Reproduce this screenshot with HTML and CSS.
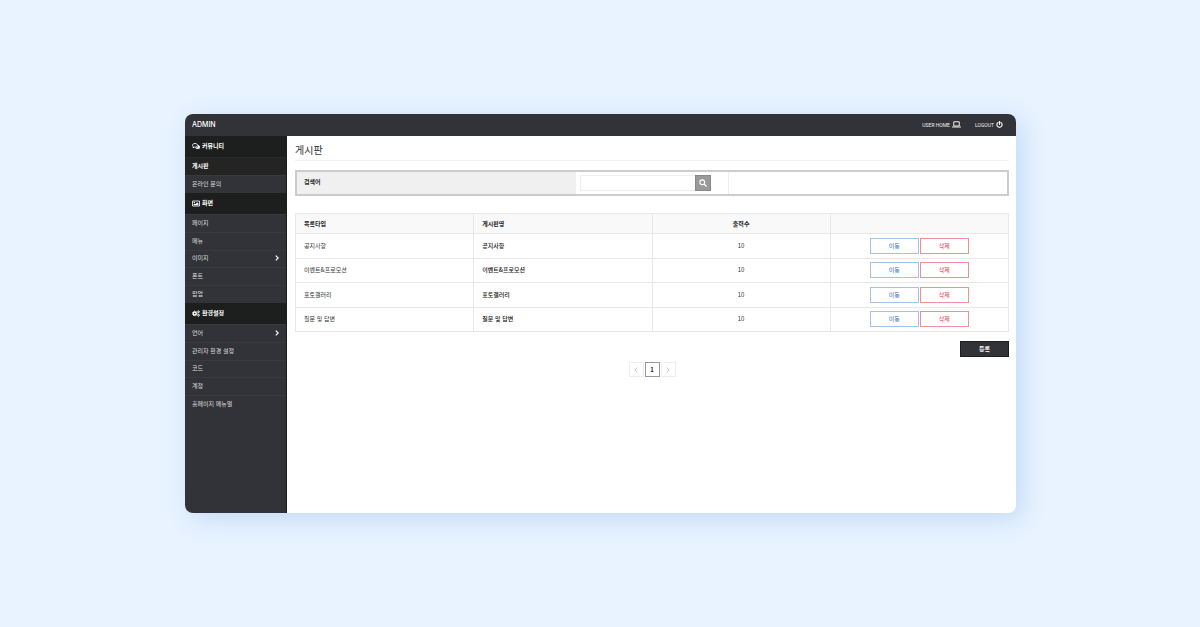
FILE: index.html
```html
<!doctype html>
<html lang="ko">
  <head>
    <meta charset="UTF-8" />
    <meta name="viewport" content="width=device-width, initial-scale=1.0" />
    <title>ADMIN - 게시판</title>
    <link rel="stylesheet" href="styles.css">
  </head>
  <body>
    <div class="admin">
      <header class="topbar">
        <a class="logo" href="#">ADMIN</a>
        <nav class="topbar-links">
          <a href="#">USER HOME
            <svg class="icon-laptop" viewBox="0 0 18 14"><path d="M3.500 1.500h11v8.500h-11z" fill="none" stroke="currentColor" stroke-width="2"/><path d="M0 11h18v1q0 1-1.500 1H1.500Q0 13 0 12z" fill="currentColor"/></svg>
          </a>
          <a href="#">LOGOUT
            <svg class="icon-power" viewBox="0 0 14 14"><path d="M4.200 3A5.200 5.200 0 1 0 9.800 3M7 1v6" fill="none" stroke="currentColor" stroke-width="2.400" stroke-linecap="round"/></svg>
          </a>
        </nav>
      </header>

      <nav class="sidebar">
        <h2>
          <svg class="icon-menu" viewBox="0 0 16 14"><path d="M6 1C2.800 1 1 2.800 1 4.700c0 1.200.7 2.200 1.700 2.900L2 9.600l2.600-1.300c.5.100.9.100 1.400.1 3.200 0 5-1.700 5-3.700S9.200 1 6 1z" fill="none" stroke="currentColor" stroke-width="1.800"/><path d="M12.300 4c2 .6 3.700 2 3.700 4 0 1.200-.6 2.200-1.500 2.900.2.700.6 1.300 1.200 1.800-1.200 0-2.200-.4-3-1-2.700.5-5-.2-6.200-1.700 3.500 0 6-2.400 5.800-6z" fill="currentColor"/></svg>
          커뮤니티
        </h2>
        <ul class="menu menu-short">
          <li class="active"><a href="#">게시판</a></li>
          <li><a href="#">온라인 문의</a></li>
        </ul>
        <h2>
          <svg class="icon-menu" viewBox="0 0 16 14"><path d="M1 2h14v10H1z" fill="none" stroke="currentColor" stroke-width="1.600"/><circle cx="4.500" cy="5" r="1.400" fill="currentColor"/><path d="M3 10.500V9l2-2 1.500 1.500L10.500 4.500 13 7v3.500z" fill="currentColor"/></svg>
          화면
        </h2>
        <ul class="menu">
          <li><a href="#">페이지</a></li>
          <li><a href="#">메뉴</a></li>
          <li>
            <a href="#">이미지
              <svg class="icon-arrow" viewBox="0 0 6 10"><path d="M1 1l4 4-4 4" fill="none" stroke="currentColor" stroke-width="2"/></svg>
            </a>
          </li>
          <li><a href="#">폰트</a></li>
          <li><a href="#">팝업</a></li>
        </ul>
        <h2>
          <svg class="icon-menu" viewBox="0 0 16 14"><circle cx="5.500" cy="7" r="3" fill="none" stroke="currentColor" stroke-width="3"/><circle cx="5.500" cy="7" r="4.800" fill="none" stroke="currentColor" stroke-width="1.500" stroke-dasharray="1.900 1.870"/><circle cx="13" cy="3.500" r="1.600" fill="none" stroke="currentColor" stroke-width="1.800"/><circle cx="13" cy="3.500" r="2.600" fill="none" stroke="currentColor" stroke-dasharray="1.300 1.420"/><circle cx="13" cy="10.500" r="1.600" fill="none" stroke="currentColor" stroke-width="1.800"/><circle cx="13" cy="10.500" r="2.600" fill="none" stroke="currentColor" stroke-dasharray="1.300 1.420"/></svg>
          환경설정
        </h2>
        <ul class="menu">
          <li>
            <a href="#">언어
              <svg class="icon-arrow" viewBox="0 0 6 10"><path d="M1 1l4 4-4 4" fill="none" stroke="currentColor" stroke-width="2"/></svg>
            </a>
          </li>
          <li><a href="#">관리자 환경 설정</a></li>
          <li><a href="#">코드</a></li>
          <li><a href="#">계정</a></li>
          <li><a href="#">홈페이지 메뉴얼</a></li>
        </ul>
      </nav>

      <main class="content">
        <h1>게시판</h1>

        <form class="search">
          <label for="keyword">검색어</label>
          <div class="search-field">
            <input type="text" id="keyword" name="keyword" />
            <button type="button" aria-label="검색">
              <svg viewBox="0 0 16 16"><circle cx="6.500" cy="6.500" r="4.800" fill="none" stroke="currentColor" stroke-width="2.200"/><path d="M10 10l5 5" stroke="currentColor" stroke-width="2.600"/></svg>
            </button>
          </div>
          <div class="search-extra"></div>
        </form>

        <table class="board-list">
          <thead>
            <tr>
              <th>목록타입</th>
              <th>게시판명</th>
              <th class="center">출력수</th>
              <th></th>
            </tr>
          </thead>
          <tbody>
            <tr>
              <td>공지사항</td>
              <td class="name">공지사항</td>
              <td class="center">10</td>
              <td>
                <div class="actions">
                  <button type="button" class="btn btn-move">이동</button>
                  <button type="button" class="btn btn-delete">삭제</button>
                </div>
              </td>
            </tr>
            <tr>
              <td>이벤트&amp;프로모션</td>
              <td class="name">이벤트&amp;프로모션</td>
              <td class="center">10</td>
              <td>
                <div class="actions">
                  <button type="button" class="btn btn-move">이동</button>
                  <button type="button" class="btn btn-delete">삭제</button>
                </div>
              </td>
            </tr>
            <tr>
              <td>포토갤러리</td>
              <td class="name">포토갤러리</td>
              <td class="center">10</td>
              <td>
                <div class="actions">
                  <button type="button" class="btn btn-move">이동</button>
                  <button type="button" class="btn btn-delete">삭제</button>
                </div>
              </td>
            </tr>
            <tr>
              <td>질문 및 답변</td>
              <td class="name">질문 및 답변</td>
              <td class="center">10</td>
              <td>
                <div class="actions">
                  <button type="button" class="btn btn-move">이동</button>
                  <button type="button" class="btn btn-delete">삭제</button>
                </div>
              </td>
            </tr>
          </tbody>
        </table>

        <div class="list-footer">
          <button type="button" class="btn btn-add">등록</button>
        </div>

        <nav class="paging">
          <a href="#" aria-label="이전"><svg viewBox="0 0 6 10"><path d="M5 1L1 5l4 4" fill="none" stroke="currentColor" stroke-width="1.400"/></svg></a>
          <a href="#" class="current">1</a>
          <a href="#" aria-label="다음"><svg viewBox="0 0 6 10"><path d="M1 1l4 4-4 4" fill="none" stroke="currentColor" stroke-width="1.400"/></svg></a>
        </nav>
      </main>
    </div>
  </body>
</html>
```
FILE: styles.css
```css
* {
  box-sizing: border-box;
}
body {
  min-height: 100vh;
  margin: 0;
  padding: 114px 184px 114px 185px;
  display: flex;
  background: #e8f3ff;
  color: #333;
  font-family: "Noto Sans CJK KR", sans-serif;
  font-size: 6px;
  line-height: 10px;
}
a {
  color: inherit;
  text-decoration: none;
}
button,
input {
  font: inherit;
  padding: 0;
  margin: 0;
  border-radius: 0;
}
button {
  cursor: pointer;
}
svg {
  display: block;
  flex: none;
}
.admin {
  flex: 1;
  display: grid;
  grid-template-columns: 102px minmax(0, 1fr);
  grid-template-rows: 22px 1fr;
  background: #fff;
  border-radius: 8px;
  overflow: hidden;
  box-shadow: 6px 6px 26px #c4d9f5;
}

/* top bar */
.topbar {
  grid-column: 1 / -1;
  display: flex;
  align-items: center;
  justify-content: space-between;
  padding: 0 13px 1px 7px;
  background: #323338;
  color: #fff;
}
.logo {
  font-family: Inter, sans-serif;
  font-size: 7px;
  font-weight: 500;
}
.topbar-links {
  display: flex;
  gap: 14px;
  color: #eee;
  font-family: Roboto, sans-serif;
  font-size: 5px;
}
.topbar-links a {
  display: flex;
  align-items: center;
  gap: 2px;
}
.icon-laptop {
  width: 9px;
  height: 7px;
}
.icon-power {
  width: 7px;
  height: 7px;
}

/* sidebar */
.sidebar {
  background: #323338;
  border-right: 1px solid #1c1d1d;
  color: #ddd;
}
.sidebar h2 {
  display: flex;
  align-items: center;
  gap: 2px;
  height: 21px;
  margin: 0;
  padding: 0 7px 1px;
  background: #1d1f1e;
  color: #fff;
  font-size: 6px;
  font-weight: bold;
}
.icon-menu {
  width: 8px;
  height: 7px;
}
.menu {
  display: grid;
  grid-auto-rows: 1fr;
  height: 89px;
  margin: 0;
  padding: 0;
  list-style: none;
}
.menu-short {
  height: 36px;
}
.menu li {
  border-top: 1px solid #393a40;
}
.menu a {
  display: flex;
  align-items: center;
  justify-content: space-between;
  height: 100%;
  padding: 0 7px 1px;
}
.menu .active {
  background: #242424;
  border-color: #2a2a2a;
  color: #fff;
  font-weight: bold;
}
.icon-arrow {
  width: 4px;
  height: 6px;
  color: #fff;
}

/* content */
.content {
  padding: 4px 7px 0 8px;
}
.content h1 {
  margin: 0;
  border-bottom: 1px solid #eef2f6;
  font-size: 10px;
  font-weight: normal;
  line-height: 20px;
}
.search {
  display: grid;
  grid-template-columns: minmax(0, 279fr) minmax(0, 153fr) minmax(0, 279fr);
  height: 26px;
  margin: 9px 0 17px;
  border: 2px solid #ccc;
}
.search label {
  display: flex;
  align-items: center;
  padding: 0 7px 2px;
  background: #f0f0f0;
  color: #222;
  font-weight: bold;
}
.search-field {
  display: flex;
  align-items: center;
  padding: 0 17px 0 4px;
}
.search-field input {
  flex: 1;
  min-width: 0;
  height: 16px;
  padding: 0 4px;
  border: 1px solid #eee;
  border-right: 0;
  background: #fff;
}
.search-field button {
  display: flex;
  align-items: center;
  justify-content: center;
  width: 16px;
  height: 16px;
  border: 1px solid #888;
  background: #999;
  color: #fff;
}
.search-field svg {
  width: 8px;
  height: 8px;
}
.search-extra {
  border-left: 1px solid #eee;
}
.board-list {
  width: 100%;
  height: 119px;
  table-layout: fixed;
  border-collapse: collapse;
}
.board-list th,
.board-list td {
  height: 24px;
  padding: 0 8px;
  border: 1px solid #e8e8e8;
  text-align: left;
}
.board-list th {
  height: 20px;
  background: #f9f9f9;
  color: #222;
}
.board-list .center {
  text-align: center;
}
.board-list .name {
  color: #111;
  font-weight: 500;
}
.actions {
  display: flex;
  justify-content: center;
  gap: 1px;
}
.btn {
  width: 49px;
  height: 16px;
  border: 1px solid;
  background: #fff;
}
.btn-move {
  border-color: #a5c1ea;
  color: #3a6fc4;
}
.btn-delete {
  border-color: #ef8f98;
  color: #e02d3f;
}
.list-footer {
  display: flex;
  justify-content: flex-end;
  margin: 9px 0 5px;
}
.btn-add {
  border-color: #1d1e22;
  background: #323338;
  color: #fff;
  font-weight: bold;
}
.paging {
  display: flex;
  justify-content: center;
  gap: 1px;
}
.paging a {
  display: flex;
  align-items: center;
  justify-content: center;
  width: 15px;
  height: 15px;
  border: 1px solid #eee;
  color: #aaa;
}
.paging .current {
  border-color: #999;
  color: #222;
  font-weight: bold;
}
.paging svg {
  width: 4px;
  height: 6px;
}
```
